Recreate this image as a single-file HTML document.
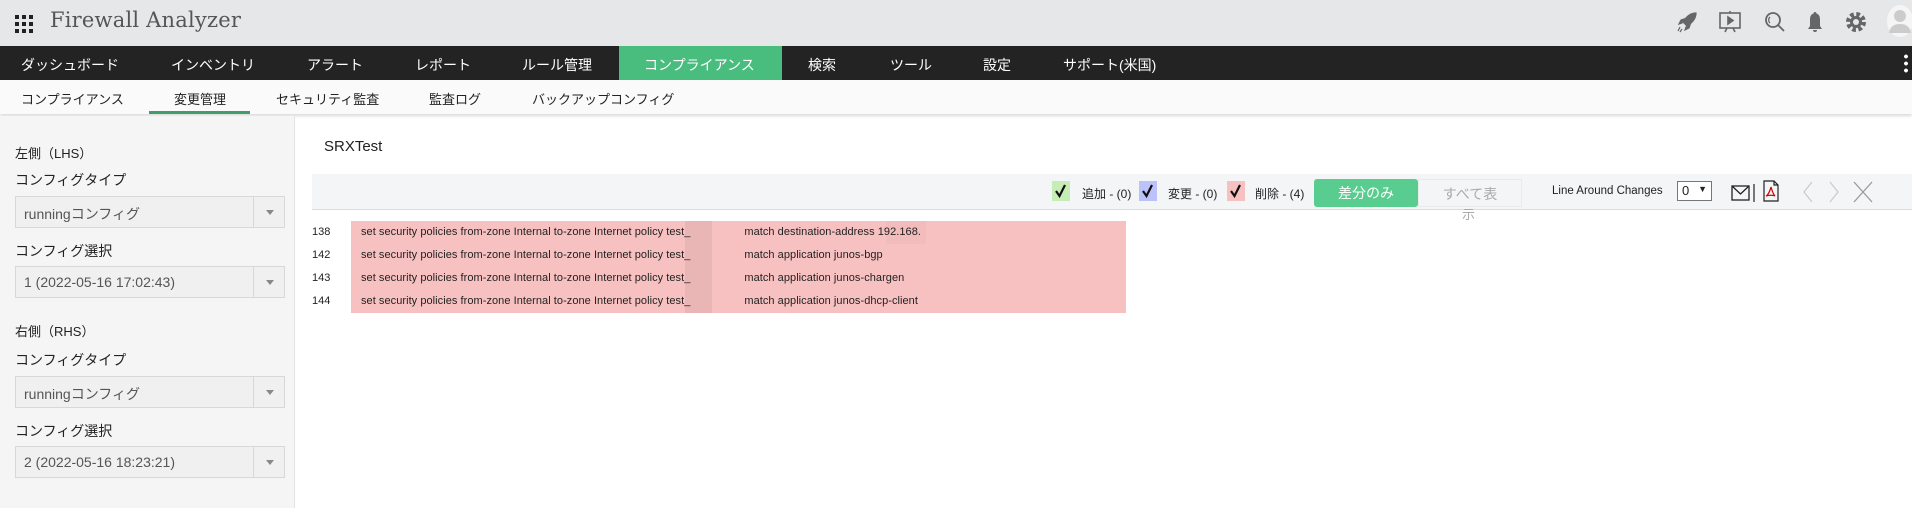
<!DOCTYPE html>
<html><head><meta charset="utf-8"><style>
*{margin:0;padding:0;box-sizing:border-box}
body{width:1912px;height:508px;overflow:hidden;background:#fff;font-family:"Liberation Sans","Noto Sans CJK JP",sans-serif;position:relative}
.a{position:absolute;white-space:nowrap}
#hdr{left:0;top:0;width:1912px;height:46px;background:#e6e7e9}
#nav{left:0;top:46px;width:1912px;height:34px;background:#232323;color:#fff;font-size:14px}
#nav span{position:absolute;top:9px}
#sub{left:0;top:80px;width:1912px;height:34px;background:#fafafa;font-size:13px;color:#222;box-shadow:0 2px 3px rgba(0,0,0,.15)}
#sub span{position:absolute;top:9px}
#left{left:0;top:116px;width:295px;height:392px;background:#f5f5f5;border-right:1px solid #e4e4e4;font-size:14px;color:#222}
.sel{position:absolute;left:15px;width:270px;height:32px;background:#f0f0f0;border:1px solid #d8d8d8;color:#555;font-size:14px;padding:7px 8px}
.sel:after{content:"";position:absolute;right:0;top:0;width:30px;height:30px;border-left:1px solid #d8d8d8}
.sel i{position:absolute;right:10px;top:13px;border:4px solid transparent;border-top:5px solid #888}
.lb{position:absolute;left:15px}
#tb{left:312px;top:174px;width:1600px;height:36px;background:#f4f5f7;border-bottom:1px solid #dcdcdc;font-size:12px;color:#222}
.cb{position:absolute;top:7px;width:18px;height:20px}
.row{position:absolute;left:312px;font-size:11px;color:#222;white-space:nowrap;width:800px;height:14px}
.row b{font-weight:normal;position:absolute;left:49px;top:0;white-space:nowrap;letter-spacing:0.05px}
</style></head><body>
<div class="a" id="hdr">
 <svg class="a" style="left:15px;top:15px" width="18" height="18" viewBox="0 0 18 18" fill="#222"><rect x="0" y="0" width="4" height="4"/><rect x="7" y="0" width="4" height="4"/><rect x="14" y="0" width="4" height="4"/><rect x="0" y="7" width="4" height="4"/><rect x="7" y="7" width="4" height="4"/><rect x="14" y="7" width="4" height="4"/><rect x="0" y="14" width="4" height="4"/><rect x="7" y="14" width="4" height="4"/><rect x="14" y="14" width="4" height="4"/></svg>
 <div class="a" style="left:50px;top:8px;font-family:'DejaVu Serif','Liberation Serif',serif;font-size:21px;color:#555;letter-spacing:0.2px">Firewall Analyzer</div>
 <svg class="a" style="left:1676px;top:11px" width="22" height="22" viewBox="0 0 22 22" fill="#666"><path d="M20 2c-6 0-10 4-13 9l4 4c5-3 9-7 9-13zM6 12l-3 1 2-4 3-1zM10 16l-1 3 4-2 1-3zM4 16l-2 4M6 18l-2 3" stroke="#666" stroke-width="1.2"/></svg>
 <svg class="a" style="left:1718px;top:10px" width="24" height="24" viewBox="0 0 24 24" fill="none" stroke="#666" stroke-width="1.6"><rect x="2" y="3" width="20" height="15"/><path d="M10 7l5 3.5-5 3.5z" fill="#666"/><path d="M12 1v2M7 22l2-4M17 22l-2-4"/></svg>
 <svg class="a" style="left:1764px;top:11px" width="22" height="22" viewBox="0 0 22 22" fill="none" stroke="#666" stroke-width="1.8"><circle cx="9" cy="9" r="7"/><path d="M14 14l6 6"/><path d="M6 6a4 4 0 0 0 0 6" stroke-width="1.2"/></svg>
 <svg class="a" style="left:1806px;top:11px" width="18" height="22" viewBox="0 0 18 22" fill="#666"><path d="M9 1c1 0 1.5.7 1.5 1.5C13.5 3.5 14 6 14 9v6l2 3H2l2-3V9c0-3 .5-5.5 3.5-6.5C7.5 1.7 8 1 9 1zM7 19h4a2 2 0 0 1-4 0z"/></svg>
 <svg class="a" style="left:1845px;top:11px" width="22" height="22" viewBox="0 0 22 22"><circle cx="11" cy="11" r="7.5" fill="none" stroke="#666" stroke-width="5" stroke-dasharray="3.5 2.4"/><circle cx="11" cy="11" r="6" fill="#666"/><circle cx="11" cy="11" r="3" fill="#e6e7e9"/></svg>
 <svg class="a" style="left:1887px;top:5px" width="25" height="32" viewBox="0 0 25 32"><ellipse cx="13" cy="16" rx="13" ry="16" fill="#fff" opacity=".6"/><circle cx="13" cy="11" r="6" fill="#ccc"/><path d="M2 28c1-7 6-9 11-9s10 2 11 9z" fill="#ccc"/></svg>
</div>
<div class="a" id="nav">
 <div class="a" style="left:619px;top:0;width:163px;height:34px;background:#48bd7e"></div>
 <span style="left:21px">ダッシュボード</span><span style="left:171px">インベントリ</span><span style="left:307px">アラート</span><span style="left:415px">レポート</span><span style="left:522px">ルール管理</span><span style="left:644px">コンプライアンス</span><span style="left:808px">検索</span><span style="left:890px">ツール</span><span style="left:983px">設定</span><span style="left:1063px">サポート(米国)</span>
 <div class="a" style="left:1904px;top:7px;width:4px;height:20px;background:radial-gradient(circle,#fff 1.8px,transparent 2px) 0 0/4px 7px"></div>
</div>
<div class="a" id="sub">
 <span style="left:21px">コンプライアンス</span><span style="left:174px">変更管理</span><span style="left:276px">セキュリティ監査</span><span style="left:429px">監査ログ</span><span style="left:532px">バックアップコンフィグ</span>
 <div class="a" style="left:149px;top:31px;width:101px;height:3px;background:#3d9e6c"></div>
</div>
<div class="a" id="left">
 <div class="lb" style="top:27px;font-size:13px">左側（LHS）</div>
 <div class="lb" style="top:54px;font-size:14px">コンフィグタイプ</div>
 <div class="sel" style="top:80px">runningコンフィグ<i></i></div>
 <div class="lb" style="top:125px">コンフィグ選択</div>
 <div class="sel" style="top:150px">1 (2022-05-16 17:02:43)<i></i></div>
 <div class="lb" style="top:205px;font-size:13px">右側（RHS）</div>
 <div class="lb" style="top:234px">コンフィグタイプ</div>
 <div class="sel" style="top:260px">runningコンフィグ<i></i></div>
 <div class="lb" style="top:305px">コンフィグ選択</div>
 <div class="sel" style="top:330px">2 (2022-05-16 18:23:21)<i></i></div>
</div>
<div class="a" style="left:324px;top:138px;font-size:15px;color:#222">SRXTest</div>
<div class="a" id="tb">
 <svg class="cb" style="left:740px" viewBox="0 0 18 20"><rect width="18" height="20" fill="#c6edb5"/><path d="M4 10l3.5 5L13 4" fill="none" stroke="#111" stroke-width="2.2"/></svg><div class="a" style="left:770px;top:11px">追加 - (0)</div>
 <svg class="cb" style="left:827px" viewBox="0 0 18 20"><rect width="18" height="20" fill="#bcc3fb"/><path d="M4 10l3.5 5L13 4" fill="none" stroke="#111" stroke-width="2.2"/></svg><div class="a" style="left:856px;top:11px">変更 - (0)</div>
 <svg class="cb" style="left:915px" viewBox="0 0 18 20"><rect width="18" height="20" fill="#f8c1c1"/><path d="M4 10l3.5 5L13 4" fill="none" stroke="#111" stroke-width="2.2"/></svg><div class="a" style="left:943px;top:11px">削除 - (4)</div>
 <div class="a" style="left:1002px;top:5px;width:104px;height:28px;background:#59cd8f;border-radius:3px;color:#fff;font-size:14px;text-align:center;line-height:28px">差分のみ</div>
 <div class="a" style="left:1106px;top:5px;width:104px;height:28px;border:1px solid #eaeaea;color:#aaa;font-size:14px;text-align:center;line-height:28px">すべて表</div>
 <div class="a" style="left:1150px;top:30px;color:#aaa;font-size:13px">示</div>
 <div class="a" style="left:1240px;top:11px;font-size:11.5px">Line Around Changes</div>
 <div class="a" style="left:1365px;top:7px;width:35px;height:20px;border:1px solid #777;background:#fff;font-size:13px;padding:1px 4px">0<span style="position:absolute;right:4px;top:2px;font-size:9px">▼</span></div>
 <svg class="a" style="left:1419px;top:9px" width="30" height="20" viewBox="0 0 30 20" fill="none" stroke="#222" stroke-width="1.3"><rect x="1" y="3" width="17" height="14"/><path d="M1 3l8.5 8L18 3"/><path d="M23 1v18" stroke="#333"/></svg>
 <svg class="a" style="left:1451px;top:6px" width="16" height="22" viewBox="0 0 16 22" fill="none" stroke="#222" stroke-width="1.2"><path d="M1 1h10l4 4v16H1z"/><path d="M11 1v4h4"/><path d="M8 7c-1 4-3 8-5 9 3-1 7-1 9 0-2-2-3-6-4-9" stroke="#c00"/></svg>
 <svg class="a" style="left:1488px;top:7px" width="100" height="22" viewBox="0 0 100 22" fill="none" stroke="#ccc" stroke-width="1.3"><path d="M12 1L4 11l8 10M30 1l8 10-8 10"/><path d="M54 1l18 20M72 1L54 21" stroke="#999"/></svg>
</div>
<div class="a" style="left:351px;top:221px;width:775px;height:92px;background:#f8c1c1"></div>
<div class="a" style="left:685px;top:221px;width:27px;height:92px;background:#eab5b5"></div>
<div class="a" style="left:886px;top:221px;width:40px;height:23px;background:#f3bcbc"></div>
<div class="row" style="top:226px">138<b>set security policies from-zone Internal to-zone Internet policy test_<span style="display:inline-block;width:54px"></span>match destination-address 192.168.</b></div>
<div class="row" style="top:249px">142<b>set security policies from-zone Internal to-zone Internet policy test_<span style="display:inline-block;width:54px"></span>match application junos-bgp</b></div>
<div class="row" style="top:272px">143<b>set security policies from-zone Internal to-zone Internet policy test_<span style="display:inline-block;width:54px"></span>match application junos-chargen</b></div>
<div class="row" style="top:295px">144<b>set security policies from-zone Internal to-zone Internet policy test_<span style="display:inline-block;width:54px"></span>match application junos-dhcp-client</b></div>
</body></html>
